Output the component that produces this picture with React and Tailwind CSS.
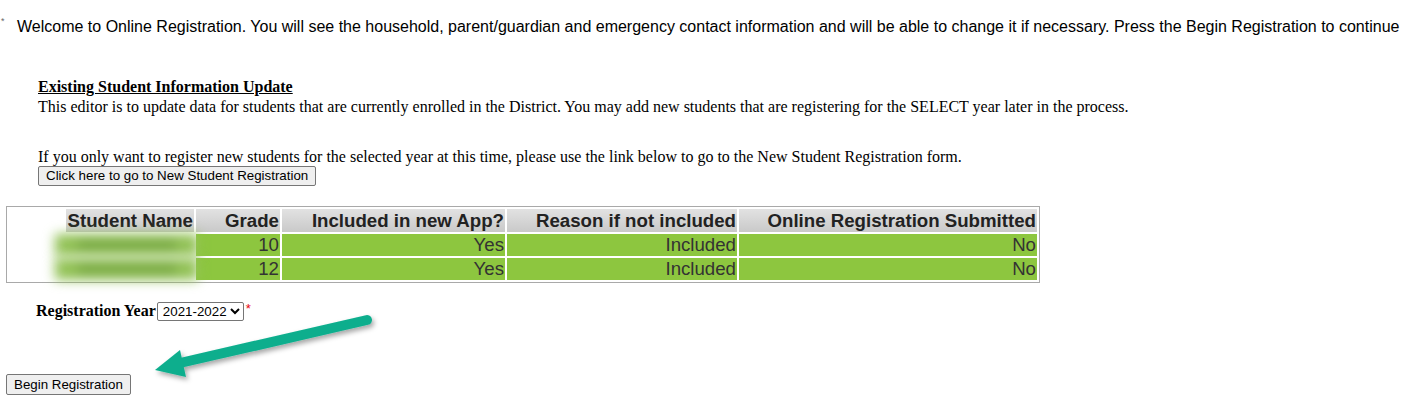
import React from "react";

const rows = [
  { grade: "10", included: "Yes", reason: "Included", submitted: "No" },
  { grade: "12", included: "Yes", reason: "Included", submitted: "No" },
];

const headCell =
  "p-0 pr-[1px] text-right font-bold text-[18.67px] leading-[23px] text-[#222] bg-[linear-gradient(#e2e2e2,#c9c9c9)]";
const bodyCell = "p-0 pr-[1px] text-right text-[18.67px] leading-[22px] text-[#333] bg-[#8dc63f]";

const Arrow = () => (
  <svg
    className="absolute left-[140px] top-[305px]"
    width="250"
    height="85"
    viewBox="0 0 250 85"
  >
    <defs>
      <filter id="sh" x="-20%" y="-40%" width="140%" height="180%">
        <feDropShadow dx="2" dy="3" stdDeviation="2.5" floodColor="#000" floodOpacity="0.35" />
      </filter>
    </defs>
    <g filter="url(#sh)">
      <line x1="227" y1="15" x2="40" y2="58" stroke="#0bae8d" strokeWidth="10" strokeLinecap="round" />
      <polygon points="15,65 40,45 46,72" fill="#0bae8d" />
    </g>
  </svg>
);

export default function App() {
  return (
    <div className="relative w-[1419px] h-[403px] bg-white overflow-hidden">
      <div className="flex pt-[17px] font-['Liberation_Sans',Arial,sans-serif] text-[16px] leading-[20px] text-black">
        <span className="w-[17px] pl-[1px] text-[9px] leading-[9px] text-[#666]">*</span>
        <span className="whitespace-nowrap">
          Welcome to Online Registration. You will see the household, parent/guardian and emergency contact
          information and will be able to change it if necessary. Press the Begin Registration to continue
        </span>
      </div>

      <div className="pl-[38px] pt-[40px] font-['Liberation_Serif','Times_New_Roman',serif] text-[16px] leading-[19px] text-black">
        <div className="font-bold underline leading-[20px]">Existing Student Information Update</div>
        <div>
          This editor is to update data for students that are currently enrolled in the District. You may add new
          students that are registering for the SELECT year later in the process.
        </div>
        <div className="mt-[31px]">
          If you only want to register new students for the selected year at this time, please use the link below to go
          to the New Student Registration form.
        </div>
        <button className="block h-[20px] px-[7px] border border-[#767676] rounded-[2px] bg-[#efefef] font-['Liberation_Sans',Arial,sans-serif] text-[13.33px] leading-[16px] text-black">
          Click here to go to New Student Registration
        </button>
      </div>

      <table className="ml-[6px] mt-[20px] w-[1034px] table-fixed border border-[#a9a9a9] border-separate border-spacing-[2px] font-['Liberation_Sans',Arial,sans-serif]">
        <colgroup>
          <col className="w-[185px]" />
          <col className="w-[84px]" />
          <col className="w-[223px]" />
          <col className="w-[230px]" />
          <col />
        </colgroup>
        <thead>
          <tr>
            <th className="p-0 text-right">
              <div className="flex justify-end">
                <span className="pl-[2px] pr-[1px] font-bold text-[18.67px] leading-[23px] text-[#222] bg-[linear-gradient(#e2e2e2,#c9c9c9)]">
                  Student Name
                </span>
              </div>
            </th>
            <th className={headCell}>Grade</th>
            <th className={headCell}>Included in new App?</th>
            <th className={headCell}>Reason if not included</th>
            <th className={headCell}>Online Registration Submitted</th>
          </tr>
        </thead>
        <tbody>
          {rows.map((r, i) => (
            <tr key={i}>
              <td className="p-0">
                <div className="h-[22px] ml-[46px] mr-[-4px] bg-[#92c256] blur-[6px] flex items-center justify-center">
                  <div className="w-[100px] h-[10px] rounded bg-[#77a742]" />
                </div>
              </td>
              <td className={bodyCell}>{r.grade}</td>
              <td className={bodyCell}>{r.included}</td>
              <td className={bodyCell}>{r.reason}</td>
              <td className={bodyCell}>{r.submitted}</td>
            </tr>
          ))}
        </tbody>
      </table>

      <div className="flex items-center h-[20px] pl-[36px] mt-[18px] font-['Liberation_Serif','Times_New_Roman',serif] text-[16px] leading-[20px] text-black">
        <span className="font-bold">Registration Year</span>
        <select
          defaultValue="2021-2022"
          className="h-[19px] ml-[1px] pl-[1px] border border-[#767676] rounded-[2px] bg-white font-['Liberation_Sans',Arial,sans-serif] text-[13.33px] text-black"
        >
          <option>2021-2022</option>
        </select>
        <span className="self-start mt-[2px] ml-[2px] text-[13px] leading-[12px] text-red-600 font-['Liberation_Sans',Arial,sans-serif]">*</span>
      </div>

      <button className="block ml-[6px] mt-[53px] h-[21px] px-[7px] border border-[#767676] rounded-[2px] bg-[#efefef] font-['Liberation_Sans',Arial,sans-serif] text-[13.33px] leading-[16px] text-black">
        Begin Registration
      </button>

      <Arrow />
    </div>
  );
}
